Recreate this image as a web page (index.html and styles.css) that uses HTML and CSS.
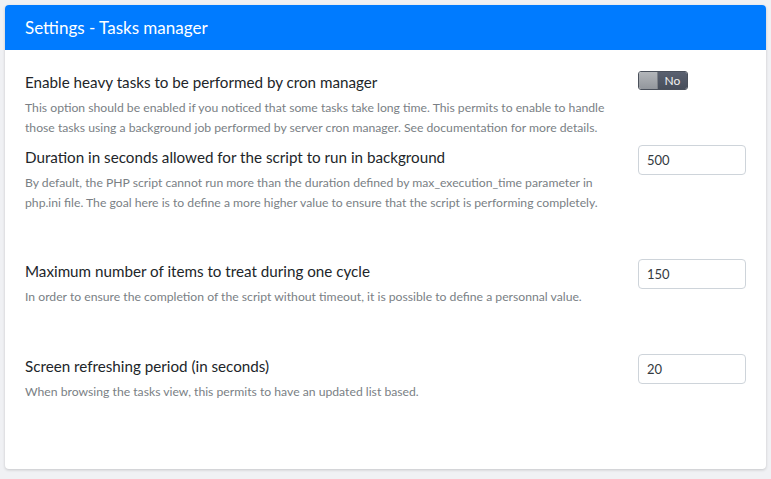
FILE: index.html
```html
<!DOCTYPE html>
<html lang="en">
<head>
    <meta charset="UTF-8">
    <meta name="viewport" content="width=device-width, initial-scale=1.0">
    <title>Settings - Tasks manager</title>
    <link rel="stylesheet" href="styles.css">
</head>
<body>
    <div class="card">
        <div class="card-header">
            <h1>Settings - Tasks manager</h1>
        </div>

        <div class="card-body">
            <!-- Cron manager -->
            <div class="setting">
                <div class="setting-text">
                    <label class="setting-label">Enable heavy tasks to be performed by cron manager</label>
                    <p class="setting-help">This option should be enabled if you noticed that some tasks take long time. This permits to enable to handle those tasks using a background job performed by server cron manager. See documentation for more details.</p>
                </div>
                <div class="setting-control">
                    <div class="toggle">
                        <span class="toggle-knob"></span>
                        <span class="toggle-state">No</span>
                    </div>
                </div>
            </div>

            <!-- Duration -->
            <div class="setting setting-spaced">
                <div class="setting-text">
                    <label class="setting-label">Duration in seconds allowed for the script to run in background</label>
                    <p class="setting-help">By default, the PHP script cannot run more than the duration defined by max_execution_time parameter in php.ini file. The goal here is to define a more higher value to ensure that the script is performing completely.</p>
                </div>
                <div class="setting-control">
                    <input type="text" class="form-input" value="500">
                </div>
            </div>

            <!-- Items per cycle -->
            <div class="setting setting-spaced">
                <div class="setting-text">
                    <label class="setting-label">Maximum number of items to treat during one cycle</label>
                    <p class="setting-help">In order to ensure the completion of the script without timeout, it is possible to define a personnal value.</p>
                </div>
                <div class="setting-control">
                    <input type="text" class="form-input" value="150">
                </div>
            </div>

            <!-- Refresh period -->
            <div class="setting setting-spaced">
                <div class="setting-text">
                    <label class="setting-label">Screen refreshing period (in seconds)</label>
                    <p class="setting-help">When browsing the tasks view, this permits to have an updated list based.</p>
                </div>
                <div class="setting-control">
                    <input type="text" class="form-input" value="20">
                </div>
            </div>
        </div>
    </div>
</body>
</html>
```

FILE: styles.css
```css
* {
    margin: 0;
    padding: 0;
    box-sizing: border-box;
}

body {
    font-family: Lato, 'Noto Sans', sans-serif;
    background-color: #f0f1f4;
    color: #212529;
    padding: 5px;
}

/* Card */
.card {
    background: #ffffff;
    border-radius: 4px;
    box-shadow: 0 1px 3px rgba(0, 0, 0, 0.18);
    overflow: hidden;
}

.card-header {
    background: #007bff;
    height: 45px;
    display: flex;
    align-items: center;
    padding: 0 20px;
}

.card-header h1 {
    font-size: 17px;
    font-weight: 400;
    color: #ffffff;
}

.card-body {
    padding: 20px 20px 21px;
}

/* Settings rows */
.setting {
    display: grid;
    grid-template-columns: 1fr 108px;
    gap: 24px;
    align-items: start;
    padding-bottom: 8px;
}

.setting-spaced {
    padding-bottom: 47px;
}

.setting-label {
    display: block;
    font-size: 15.2px;
    line-height: 24px;
    color: #212529;
}

.setting-help {
    margin-top: 4px;
    font-size: 12.2px;
    line-height: 19.5px;
    color: #7a7f85;
}

/* Toggle */
.toggle {
    display: flex;
    width: 50px;
    height: 19px;
    margin-top: 1px;
    border-radius: 3px;
    overflow: hidden;
    border: 1px solid #4a505b;
}

.toggle-knob {
    width: 19px;
    background: linear-gradient(#b3b6ba, #92969c);
    border-right: 1px solid #7d8188;
}

.toggle-state {
    flex: 1;
    background: linear-gradient(#5a6170, #474e5b);
    color: #f1f1f1;
    font-size: 12px;
    line-height: 17px;
    text-align: center;
}

/* Inputs */
.form-input {
    width: 108px;
    height: 30px;
    padding: 0 8px;
    border: 1px solid #ced4da;
    border-radius: 4px;
    font-family: inherit;
    font-size: 13px;
    color: #333a41;
    background: #ffffff;
}
```
